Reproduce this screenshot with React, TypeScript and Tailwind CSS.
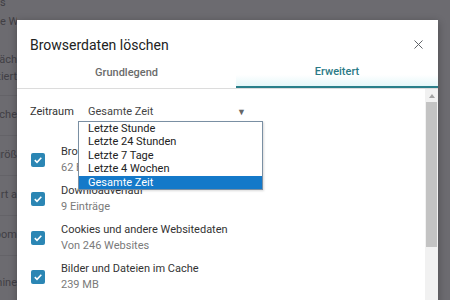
import { X } from 'lucide-react';

const bgRows = [
  { h: 'h-[7px]', t: 's', line: false, left: true },
  { h: 'h-[30px]', t: 'e W', line: false, left: true },
  { h: 'h-[15px]', t: '', line: false, left: false },
  { h: 'h-[16px]', t: 'äch', line: false, left: false },
  { h: 'h-[18px]', t: 'tiert', line: false, left: false },
  { h: 'h-[9px]', t: '', line: false, left: false },
  { h: 'h-[40px]', t: 'che', line: true, left: false },
  { h: 'h-[40px]', t: 'größ', line: true, left: false },
  { h: 'h-[40px]', t: 'rt a', line: true, left: false },
  { h: 'h-[40px]', t: 'oom', line: true, left: false },
  { h: 'h-[56px]', t: 'hine', line: true, left: false },
];

const options = ['Letzte Stunde', 'Letzte 24 Stunden', 'Letzte 7 Tage', 'Letzte 4 Wochen', 'Gesamte Zeit'];

const items = [
  { title: 'Browserverlauf', sub: '62 Einträge' },
  { title: 'Downloadverlauf', sub: '9 Einträge' },
  { title: 'Cookies und andere Websitedaten', sub: 'Von 246 Websites' },
  { title: 'Bilder und Dateien im Cache', sub: '239 MB' },
];

function Check() {
  return (
    <div className="w-[14px] h-[14px] rounded-[2px] bg-[#2b86b4] flex items-center justify-center shrink-0">
      <svg width="10" height="10" viewBox="0 0 10 10" fill="none">
        <path d="M1.8 5.2 L4 7.3 L8.3 2.8" stroke="white" strokeWidth="1.6" />
      </svg>
    </div>
  );
}

export default function App() {
  return (
    <div className="relative w-[450px] h-[300px] overflow-hidden bg-[#6c6b70] font-['Roboto',sans-serif]">
      {/* page behind the overlay */}
      <div className="w-[17px] overflow-hidden flex flex-col">
        {bgRows.map((r, i) => (
          <div
            key={i}
            className={`${r.h} flex items-center ${r.left ? 'justify-start' : 'justify-end'} whitespace-nowrap text-[11px] text-[#413f45] ${r.line ? 'border-t border-[#646368]' : ''}`}
          >
            {r.t}
          </div>
        ))}
      </div>

      {/* dialog */}
      <div className="absolute left-[17px] top-[20px] w-[421px] h-[300px] bg-white shadow-[0_2px_8px_rgba(0,0,0,0.3)]">
        <div className="h-[38px] pt-[17px] pl-[13px] pr-[12px] flex items-start justify-between">
          <span className="text-[14px] leading-[16px] text-[#222]">Browserdaten löschen</span>
          <X className="w-[15px] h-[15px] text-[#5f6368]" strokeWidth={1.6} />
        </div>
        <div className="h-[31px] flex border-b border-[#dcdcdc]">
          <div className="w-[219px] flex items-center justify-center text-[11px] font-medium text-[#6b6b6b]">
            Grundlegend
          </div>
          <div className="flex-1 flex items-center justify-center text-[11px] font-medium text-[#2a7a86] border-b-2 border-[#2b7f8a] bg-gradient-to-b from-white from-60% to-[#e6f7f9]">
            Erweitert
          </div>
        </div>

        <div className="relative flex">
          <div className="flex-1">
            <div className="h-[51px] pt-[15px] pl-[13px] flex items-start text-[11px] leading-[16px] text-[#333]">
              <span className="w-[58px]">Zeitraum</span>
              <span className="w-[149px] text-[#444]">Gesamte Zeit</span>
              <span className="text-[9px] text-[#666] leading-[16px]">▼</span>
            </div>
            {items.map((it) => (
              <div key={it.title} className="h-[39px] pl-[14px] flex items-center gap-[16px]">
                <Check />
                <div className="flex flex-col text-[11px] leading-[16px]">
                  <span className="text-[#333]">{it.title}</span>
                  <span className="text-[#7a7a7a]">{it.sub}</span>
                </div>
              </div>
            ))}
          </div>
          <div className="w-[13px] h-[240px] bg-[#f1f1f1] flex flex-col items-center">
            <div className="h-[13px] flex items-center justify-center">
              <svg width="6" height="4" viewBox="0 0 6 4">
                <path d="M0 4 L3 0 L6 4 Z" fill="#a3a3a3" />
              </svg>
            </div>
            <div className="w-[11px] h-[145px] bg-[#c3c3c3]" />
          </div>

          {/* open select list */}
          <div className="absolute left-[61px] top-[32px] w-[185px] border border-[#7a8fa3] bg-white text-[11px] text-[#222] shadow-[1px_1px_2px_rgba(0,0,0,0.15)]">
            {options.map((o, i) => (
              <div
                key={o}
                className={`h-[13.4px] leading-[13.4px] pl-[9px] ${i === options.length - 1 ? 'bg-[#1479c9] text-white' : ''}`}
              >
                {o}
              </div>
            ))}
          </div>
        </div>
      </div>
    </div>
  );
}
